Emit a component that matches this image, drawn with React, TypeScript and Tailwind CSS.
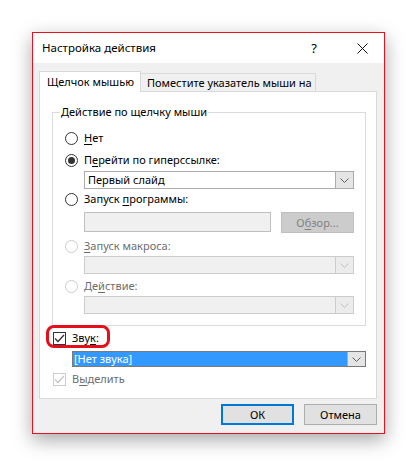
import React from "react";

function Chevron({ color }: { color: string }) {
  return (
    <svg width="9" height="5" viewBox="0 0 9 5">
      <path d="M0.5 0.5 L4.5 4.5 L8.5 0.5" fill="none" stroke={color} strokeWidth="1" />
    </svg>
  );
}

function Radio({ checked, disabled }: { checked?: boolean; disabled?: boolean }) {
  return (
    <span
      className={
        disabled
          ? "flex h-[13px] w-[13px] shrink-0 items-center justify-center rounded-full border border-[#cccccc] bg-white"
          : "flex h-[13px] w-[13px] shrink-0 items-center justify-center rounded-full border border-[#333333] bg-white"
      }
    >
      {checked && <span className="h-[7px] w-[7px] rounded-full bg-[#333333]" />}
    </span>
  );
}

function Check({ disabled }: { disabled?: boolean }) {
  return (
    <span
      className={
        disabled
          ? "flex h-[13px] w-[13px] shrink-0 items-center justify-center border border-[#cccccc] bg-white"
          : "flex h-[13px] w-[13px] shrink-0 items-center justify-center border border-[#333333] bg-white"
      }
    >
      <svg width="11" height="9" viewBox="0 0 11 9">
        <path d="M1 4.5 L4 7.5 L10 1" fill="none" stroke={disabled ? "#c4c4c4" : "#333333"} strokeWidth="1.3" />
      </svg>
    </span>
  );
}

function Select({ text, disabled }: { text?: string; disabled?: boolean }) {
  return (
    <div
      className={
        disabled
          ? "ml-[19px] flex h-[18px] w-[270px] border border-[#cccccc] bg-[#f0f0f0]"
          : "ml-[19px] flex h-[18px] w-[270px] border border-[#acacac] bg-white"
      }
    >
      <div className="flex flex-1 items-center pl-[3px] leading-[16px]">{text}</div>
      <div
        className={
          disabled
            ? "flex w-[18px] items-center justify-center border-l border-[#cccccc] bg-[#ececec]"
            : "flex w-[18px] items-center justify-center border-l border-[#acacac] bg-[#e5e5e5]"
        }
      >
        <Chevron color={disabled ? "#c0c0c0" : "#606060"} />
      </div>
    </div>
  );
}

export default function App() {
  return (
    <div className="h-[466px] w-[418px] overflow-hidden whitespace-nowrap bg-white pl-[32px] pt-[32px] font-['Noto_Sans',sans-serif] text-[11px] text-black">
      <div className="flex h-[402px] w-[353px] flex-col border border-[#e81123] bg-[#f0f0f0] shadow-[0_6px_18px_rgba(0,0,0,0.35)]">
        {/* title bar */}
        <div className="flex h-[30px] items-center bg-white pl-[9px]">
          <span className="flex-1 text-[11.5px] leading-[16px]">Настройка действия</span>
          <span className="mr-[40px] text-[13px] leading-[16px]">?</span>
          <span className="mr-[16px] flex items-center">
            <svg width="11" height="11" viewBox="0 0 11 11">
              <path d="M0.5 0.5 L10.5 10.5 M10.5 0.5 L0.5 10.5" stroke="#111" strokeWidth="1" />
            </svg>
          </span>
        </div>
        {/* body */}
        <div className="flex flex-col pl-[6px] pt-[8px]">
          {/* tabs */}
          <div className="relative z-10 -mb-px flex h-[21px] items-end">
            <div className="flex h-[21px] w-[102px] items-center border border-b-0 border-[#d9d9d9] bg-white pl-[7px] leading-[16px]">
              Щелчок мышью
            </div>
            <div className="mb-[1px] flex h-[18px] w-[175px] items-center border border-b-0 border-l-0 border-[#d9d9d9] bg-[#f0f0f0] pl-[6px] leading-[16px]">
              Поместите указатель мыши на
            </div>
          </div>
          {/* panel */}
          <div className="flex h-[308px] w-[338px] flex-col border border-[#d9d9d9] bg-white pl-[12px] pt-[20px]">
            {/* group box */}
            <div className="relative flex h-[214px] w-[314px] flex-col border border-[#dcdcdc] pl-[12px]">
              <span className="absolute -top-[9px] left-[7px] bg-white px-[1px] leading-[16px]">
                Действие по щелчку мыши
              </span>
              <div className="mt-[17px] flex h-[16px] items-center gap-[6px] leading-[16px]">
                <Radio />
                <span>
                  <u className="underline-offset-2">Н</u>ет
                </span>
              </div>
              <div className="mt-[6px] flex h-[16px] items-center gap-[6px] leading-[16px]">
                <Radio checked />
                <span>
                  П<u className="underline-offset-2">е</u>рейти по гиперссылке:
                </span>
              </div>
              <div className="mt-[3px]">
                <Select text="Первый слайд" />
              </div>
              <div className="mt-[2px] flex h-[16px] items-center gap-[6px] leading-[16px]">
                <Radio />
                <span>
                  Запуск <u className="underline-offset-2">п</u>рограммы:
                </span>
              </div>
              <div className="ml-[19px] mt-[5px] flex h-[21px] items-start gap-[10px]">
                <div className="h-[20px] w-[187px] border border-[#bfbfbf] bg-[#f0f0f0]" />
                <div className="flex h-[21px] w-[73px] items-center justify-center border border-[#bfbfbf] bg-[#cccccc] leading-[16px] text-[#838383]">
                  <span>
                    О<u className="underline-offset-2">б</u>зор...
                  </span>
                </div>
              </div>
              <div className="mt-[5px] flex h-[16px] items-center gap-[6px] leading-[16px] text-[#6d6d6d]">
                <Radio disabled />
                <span>
                  <u className="underline-offset-2">З</u>апуск макроса:
                </span>
              </div>
              <div className="mt-[2px]">
                <Select disabled />
              </div>
              <div className="mt-[4px] flex h-[16px] items-center gap-[6px] leading-[16px] text-[#6d6d6d]">
                <Radio disabled />
                <span>
                  Де<u className="underline-offset-2">й</u>ствие:
                </span>
              </div>
              <div className="mt-[2px]">
                <Select disabled />
              </div>
            </div>
            {/* sound */}
            <div className="relative ml-[1px] mt-[4px] flex h-[16px] items-center gap-[6px] leading-[16px]">
              <Check />
              <span>
                Зву<u className="underline-offset-2">к</u>:
              </span>
              <span className="absolute -left-[7px] -top-[5px] h-[23px] w-[64px] rounded-[8px] border-[3px] border-[#e3101b]" />
            </div>
            <div className="ml-[20px] mt-[5px] flex h-[16px] w-[294px] border border-[#7a7a7a] bg-white">
              <div className="flex flex-1 items-center bg-[#3399ff] pl-[1px] leading-[14px] text-white">
                [Нет звука]
              </div>
              <div className="flex w-[18px] items-center justify-center border-l border-[#acacac] bg-[#e5e5e5]">
                <Chevron color="#606060" />
              </div>
            </div>
            <div className="ml-[1px] mt-[4px] flex h-[16px] items-center gap-[6px] leading-[16px] text-[#6d6d6d]">
              <Check disabled />
              <span>
                В<u className="underline-offset-2">ы</u>делить
              </span>
            </div>
          </div>
          {/* buttons */}
          <div className="mt-[5px] flex w-[338px] justify-end gap-[10px]">
            <div className="flex h-[21px] w-[73px] items-center justify-center border-2 border-[#0078d7] bg-[#e1e1e1] leading-[16px]">
              ОК
            </div>
            <div className="flex h-[21px] w-[73px] items-center justify-center border border-[#adadad] bg-[#e1e1e1] leading-[16px]">
              Отмена
            </div>
          </div>
        </div>
      </div>
    </div>
  );
}
